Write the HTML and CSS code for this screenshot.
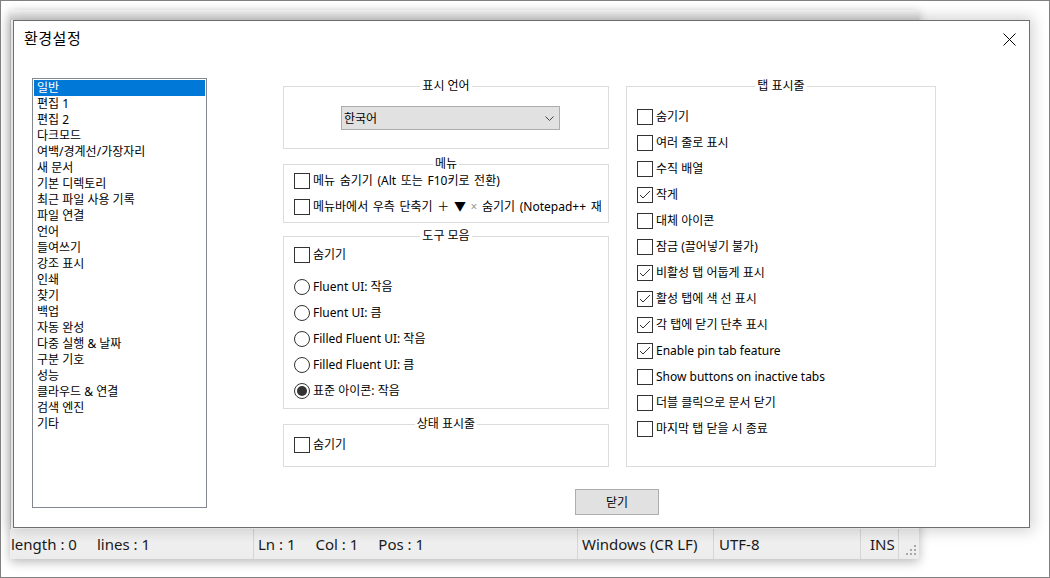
FILE: index.html
```html
<!DOCTYPE html>
<html lang="ko">
<head>
<meta charset="utf-8">
<title>환경설정</title>
<link rel="stylesheet" href="styles.css">
</head>
<body>
<div class="desktop">
  <div class="npp">
    <div class="npp-top"></div>
    <div class="npp-main"></div>
    <div class="statusbar">
      <div class="sb sb1"><span class="sp">length : 0</span><span>lines : 1</span></div>
      <div class="sb sb2"><span class="sp">Ln : 1</span><span class="sp">Col : 1</span><span>Pos : 1</span></div>
      <div class="sb sb3">Windows (CR LF)</div>
      <div class="sb sb4">UTF-8</div>
      <div class="sb sb5">INS</div>
      <div class="sb sb6">
        <svg class="grip" width="12" height="12" viewBox="0 0 12 12">
          <rect x="9" y="1" width="2" height="2"/>
          <rect x="5" y="5" width="2" height="2"/><rect x="9" y="5" width="2" height="2"/>
          <rect x="1" y="9" width="2" height="2"/><rect x="5" y="9" width="2" height="2"/><rect x="9" y="9" width="2" height="2"/>
        </svg>
      </div>
    </div>
  </div>

  <div class="dialog">
    <div class="dlg-head">
      <div class="dlg-title">환경설정</div>
      <svg class="close" width="13" height="13" viewBox="0 0 13 13">
        <line x1="0.5" y1="0.5" x2="12.5" y2="12.5"/>
        <line x1="12.5" y1="0.5" x2="0.5" y2="12.5"/>
      </svg>
    </div>
    <div class="dlg-body">
      <ul class="cat-list">
        <li class="sel">일반</li>
        <li>편집 1</li>
        <li>편집 2</li>
        <li>다크모드</li>
        <li>여백/경계선/가장자리</li>
        <li>새 문서</li>
        <li>기본 디렉토리</li>
        <li>최근 파일 사용 기록</li>
        <li>파일 연결</li>
        <li>언어</li>
        <li>들여쓰기</li>
        <li>강조 표시</li>
        <li>인쇄</li>
        <li>찾기</li>
        <li>백업</li>
        <li>자동 완성</li>
        <li>다중 실행 &amp; 날짜</li>
        <li>구분 기호</li>
        <li>성능</li>
        <li>클라우드 &amp; 연결</li>
        <li>검색 엔진</li>
        <li>기타</li>
      </ul>

      <div class="panel">
        <div class="cols">
          <div class="col-left">
            <div class="group g-lang">
              <div class="gtitle">표시 언어</div>
              <div class="gbody">
                <div class="combo">
                  <span>한국어</span>
                  <svg width="9" height="5" viewBox="0 0 9 5"><polyline points="0.5,0.5 4.5,4.5 8.5,0.5" fill="none" stroke="#444" stroke-width="1"/></svg>
                </div>
              </div>
            </div>

            <div class="group g-menu">
              <div class="gtitle">메뉴</div>
              <div class="gbody">
                <div class="row"><span class="cb"></span><span class="lbl">메뉴 숨기기 (Alt 또는 F10키로 전환)</span></div>
                <div class="row"><span class="cb"></span><span class="lbl">메뉴바에서 우측 단축기 ＋ ▼ <span class="xg">×</span> 숨기기 (Notepad++ 재</span></div>
              </div>
            </div>

            <div class="group g-tool">
              <div class="gtitle">도구 모음</div>
              <div class="gbody">
                <div class="row"><span class="cb"></span><span class="lbl">숨기기</span></div>
                <div class="radios">
                  <div class="row"><span class="rb"></span><span class="lbl">Fluent UI: 작음</span></div>
                  <div class="row"><span class="rb"></span><span class="lbl">Fluent UI: 큼</span></div>
                  <div class="row"><span class="rb"></span><span class="lbl">Filled Fluent UI: 작음</span></div>
                  <div class="row"><span class="rb"></span><span class="lbl">Filled Fluent UI: 큼</span></div>
                  <div class="row"><span class="rb on"></span><span class="lbl">표준 아이콘: 작음</span></div>
                </div>
              </div>
            </div>

            <div class="group g-status">
              <div class="gtitle">상태 표시줄</div>
              <div class="gbody">
                <div class="row"><span class="cb"></span><span class="lbl">숨기기</span></div>
              </div>
            </div>
          </div>

          <div class="group g-tab">
            <div class="gtitle">탭 표시줄</div>
            <div class="gbody">
              <div class="row"><span class="cb"></span><span class="lbl">숨기기</span></div>
              <div class="row"><span class="cb"></span><span class="lbl">여러 줄로 표시</span></div>
              <div class="row"><span class="cb"></span><span class="lbl">수직 배열</span></div>
              <div class="row"><span class="cb"><svg width="14" height="14" viewBox="0 0 14 14"><polyline points="2,7 5,10 12,3" fill="none" stroke="#333" stroke-width="1"/></svg></span><span class="lbl">작게</span></div>
              <div class="row"><span class="cb"></span><span class="lbl">대체 아이콘</span></div>
              <div class="row"><span class="cb"></span><span class="lbl">잠금 (끌어넣기 불가)</span></div>
              <div class="row"><span class="cb"><svg width="14" height="14" viewBox="0 0 14 14"><polyline points="2,7 5,10 12,3" fill="none" stroke="#333" stroke-width="1"/></svg></span><span class="lbl">비활성 탭 어둡게 표시</span></div>
              <div class="row"><span class="cb"><svg width="14" height="14" viewBox="0 0 14 14"><polyline points="2,7 5,10 12,3" fill="none" stroke="#333" stroke-width="1"/></svg></span><span class="lbl">활성 탭에 색 선 표시</span></div>
              <div class="row"><span class="cb"><svg width="14" height="14" viewBox="0 0 14 14"><polyline points="2,7 5,10 12,3" fill="none" stroke="#333" stroke-width="1"/></svg></span><span class="lbl">각 탭에 닫기 단추 표시</span></div>
              <div class="row"><span class="cb"><svg width="14" height="14" viewBox="0 0 14 14"><polyline points="2,7 5,10 12,3" fill="none" stroke="#333" stroke-width="1"/></svg></span><span class="lbl">Enable pin tab feature</span></div>
              <div class="row"><span class="cb"></span><span class="lbl">Show buttons on inactive tabs</span></div>
              <div class="row"><span class="cb"></span><span class="lbl">더블 클릭으로 문서 닫기</span></div>
              <div class="row"><span class="cb"></span><span class="lbl">마지막 탭 닫을 시 종료</span></div>
            </div>
          </div>
        </div>
        <div class="btn-row"><button class="btn" type="button">닫기</button></div>
      </div>
    </div>
  </div>
</div>
</body>
</html>
```

FILE: styles.css
```css
* { box-sizing: border-box; }
html, body { margin: 0; padding: 0; background: #fff; }
body {
  font-family: "Noto Sans", "Noto Sans CJK KR", sans-serif;
  font-size: 12px;
  color: #000;
}

.desktop {
  position: relative;
  width: 1050px;
  height: 578px;
  border: 1px solid #808080;
  background: #fff;
  overflow: hidden;
}

/* Notepad++ window behind the dialog */
.npp {
  position: absolute;
  left: 9px;
  top: 9px;
  width: 909px;
  height: 549px;
  display: flex;
  flex-direction: column;
  background: #fff;
  box-shadow: 0 3px 10px rgba(0, 0, 0, 0.28);
}
.npp-top {
  height: 10px;
  background: linear-gradient(#f6f6f6, #d6d6d6);
}
.npp-main { flex: 1; background: #fff; border-left: 1px solid #c4c4c4; }
.statusbar {
  height: 30px;
  display: flex;
  background: linear-gradient(#f3f3f3, #ececec);
  font-size: 15px;
  line-height: 30px;
  color: #1a1a1a;
  white-space: nowrap;
}
.sb { height: 30px; overflow: hidden; }
.sb + .sb { border-left: 1px solid #d6d6d6; }
.sb .sp { margin-right: 20px; }
.sb1 { width: 243px; padding-left: 1px; }
.sb2 { width: 324px; padding-left: 4px; }
.sb3 { width: 136px; padding-left: 4px; }
.sb4 { width: 147px; padding-left: 5px; }
.sb5 { width: 38px; padding-left: 9px; }
.sb6 { width: 21px; display: flex; align-items: flex-end; padding: 0 0 3px 6px; }
.grip { display: block; fill: #a8a8a8; }

/* Preferences dialog */
.dialog {
  position: absolute;
  left: 12px;
  top: 19px;
  width: 1017px;
  height: 508px;
  background: #fff;
  border: 1px solid #6e6e6e;
  box-shadow: 0 0 14px 3px rgba(0, 0, 0, 0.18);
}
.dlg-head {
  height: 57px;
  display: flex;
  justify-content: space-between;
  align-items: flex-start;
  padding: 7px 13px 0 10px;
}
.dlg-title { font-size: 15px; line-height: 20px; letter-spacing: 0.5px; }
.close { display: block; margin-top: 5px; stroke: #000; stroke-width: 1; }

.dlg-body { display: flex; padding-left: 18px; }

.cat-list {
  list-style: none;
  margin: 0;
  padding: 1px;
  width: 175px;
  height: 430px;
  border: 1px solid #828790;
}
.cat-list li {
  height: 16px;
  line-height: 16px;
  padding-left: 3px;
  white-space: nowrap;
}
.cat-list li.sel { background: #0078d7; color: #fff; }

.panel { margin-left: 76px; }
.cols { display: flex; align-items: flex-start; }
.col-left { width: 326px; display: flex; flex-direction: column; }

.group { border: 1px solid #dcdcdc; }
.gtitle {
  width: fit-content;
  margin: -9px auto -7px;
  padding: 0 2px;
  background: #fff;
  line-height: 16px;
  white-space: nowrap;
}

.g-lang { margin-top: 8px; height: 63px; }
.g-lang .gbody { padding: 19px 0 0 57px; }
.combo {
  width: 219px;
  height: 24px;
  display: flex;
  align-items: center;
  justify-content: space-between;
  padding: 0 5px 0 2px;
  background: #e1e1e1;
  border: 1px solid #adadad;
}
.combo svg { display: block; }

.g-menu { margin-top: 15px; height: 59px; }
.g-menu .gbody { padding: 3px 7px 0 10px; }
.g-menu .lbl { word-spacing: 1.5px; }

.g-tool { margin-top: 13px; height: 173px; }
.g-tool .gbody { padding: 5px 7px 0 10px; }
.radios { margin-top: 6px; }

.g-status { margin-top: 15px; height: 43px; }
.g-status .gbody { padding: 7px 7px 0 10px; }

.g-tab { margin-left: 17px; margin-top: 8px; width: 310px; height: 381px; }
.g-tab .gbody { padding: 17px 7px 0 10px; }

.row {
  display: flex;
  align-items: center;
  gap: 3px;
  height: 26px;
  white-space: nowrap;
  overflow: hidden;
}
.lbl { line-height: 16px; }
.xg { color: #9a9a9a; }

.cb {
  flex: none;
  width: 16px;
  height: 16px;
  border: 1px solid #333;
  background: #fff;
}
.cb svg { display: block; }

.rb {
  flex: none;
  width: 16px;
  height: 16px;
  border: 1px solid #333;
  border-radius: 50%;
  background: #fff;
  display: flex;
  align-items: center;
  justify-content: center;
}
.rb.on::after {
  content: "";
  width: 10px;
  height: 10px;
  border-radius: 50%;
  background: #333;
}

.btn-row { margin-top: 22px; padding-left: 292px; }
.btn {
  display: block;
  width: 84px;
  height: 26px;
  padding: 0;
  background: #e1e1e1;
  border: 1px solid #adadad;
  font-family: inherit;
  font-size: 12px;
  color: #000;
}
```
